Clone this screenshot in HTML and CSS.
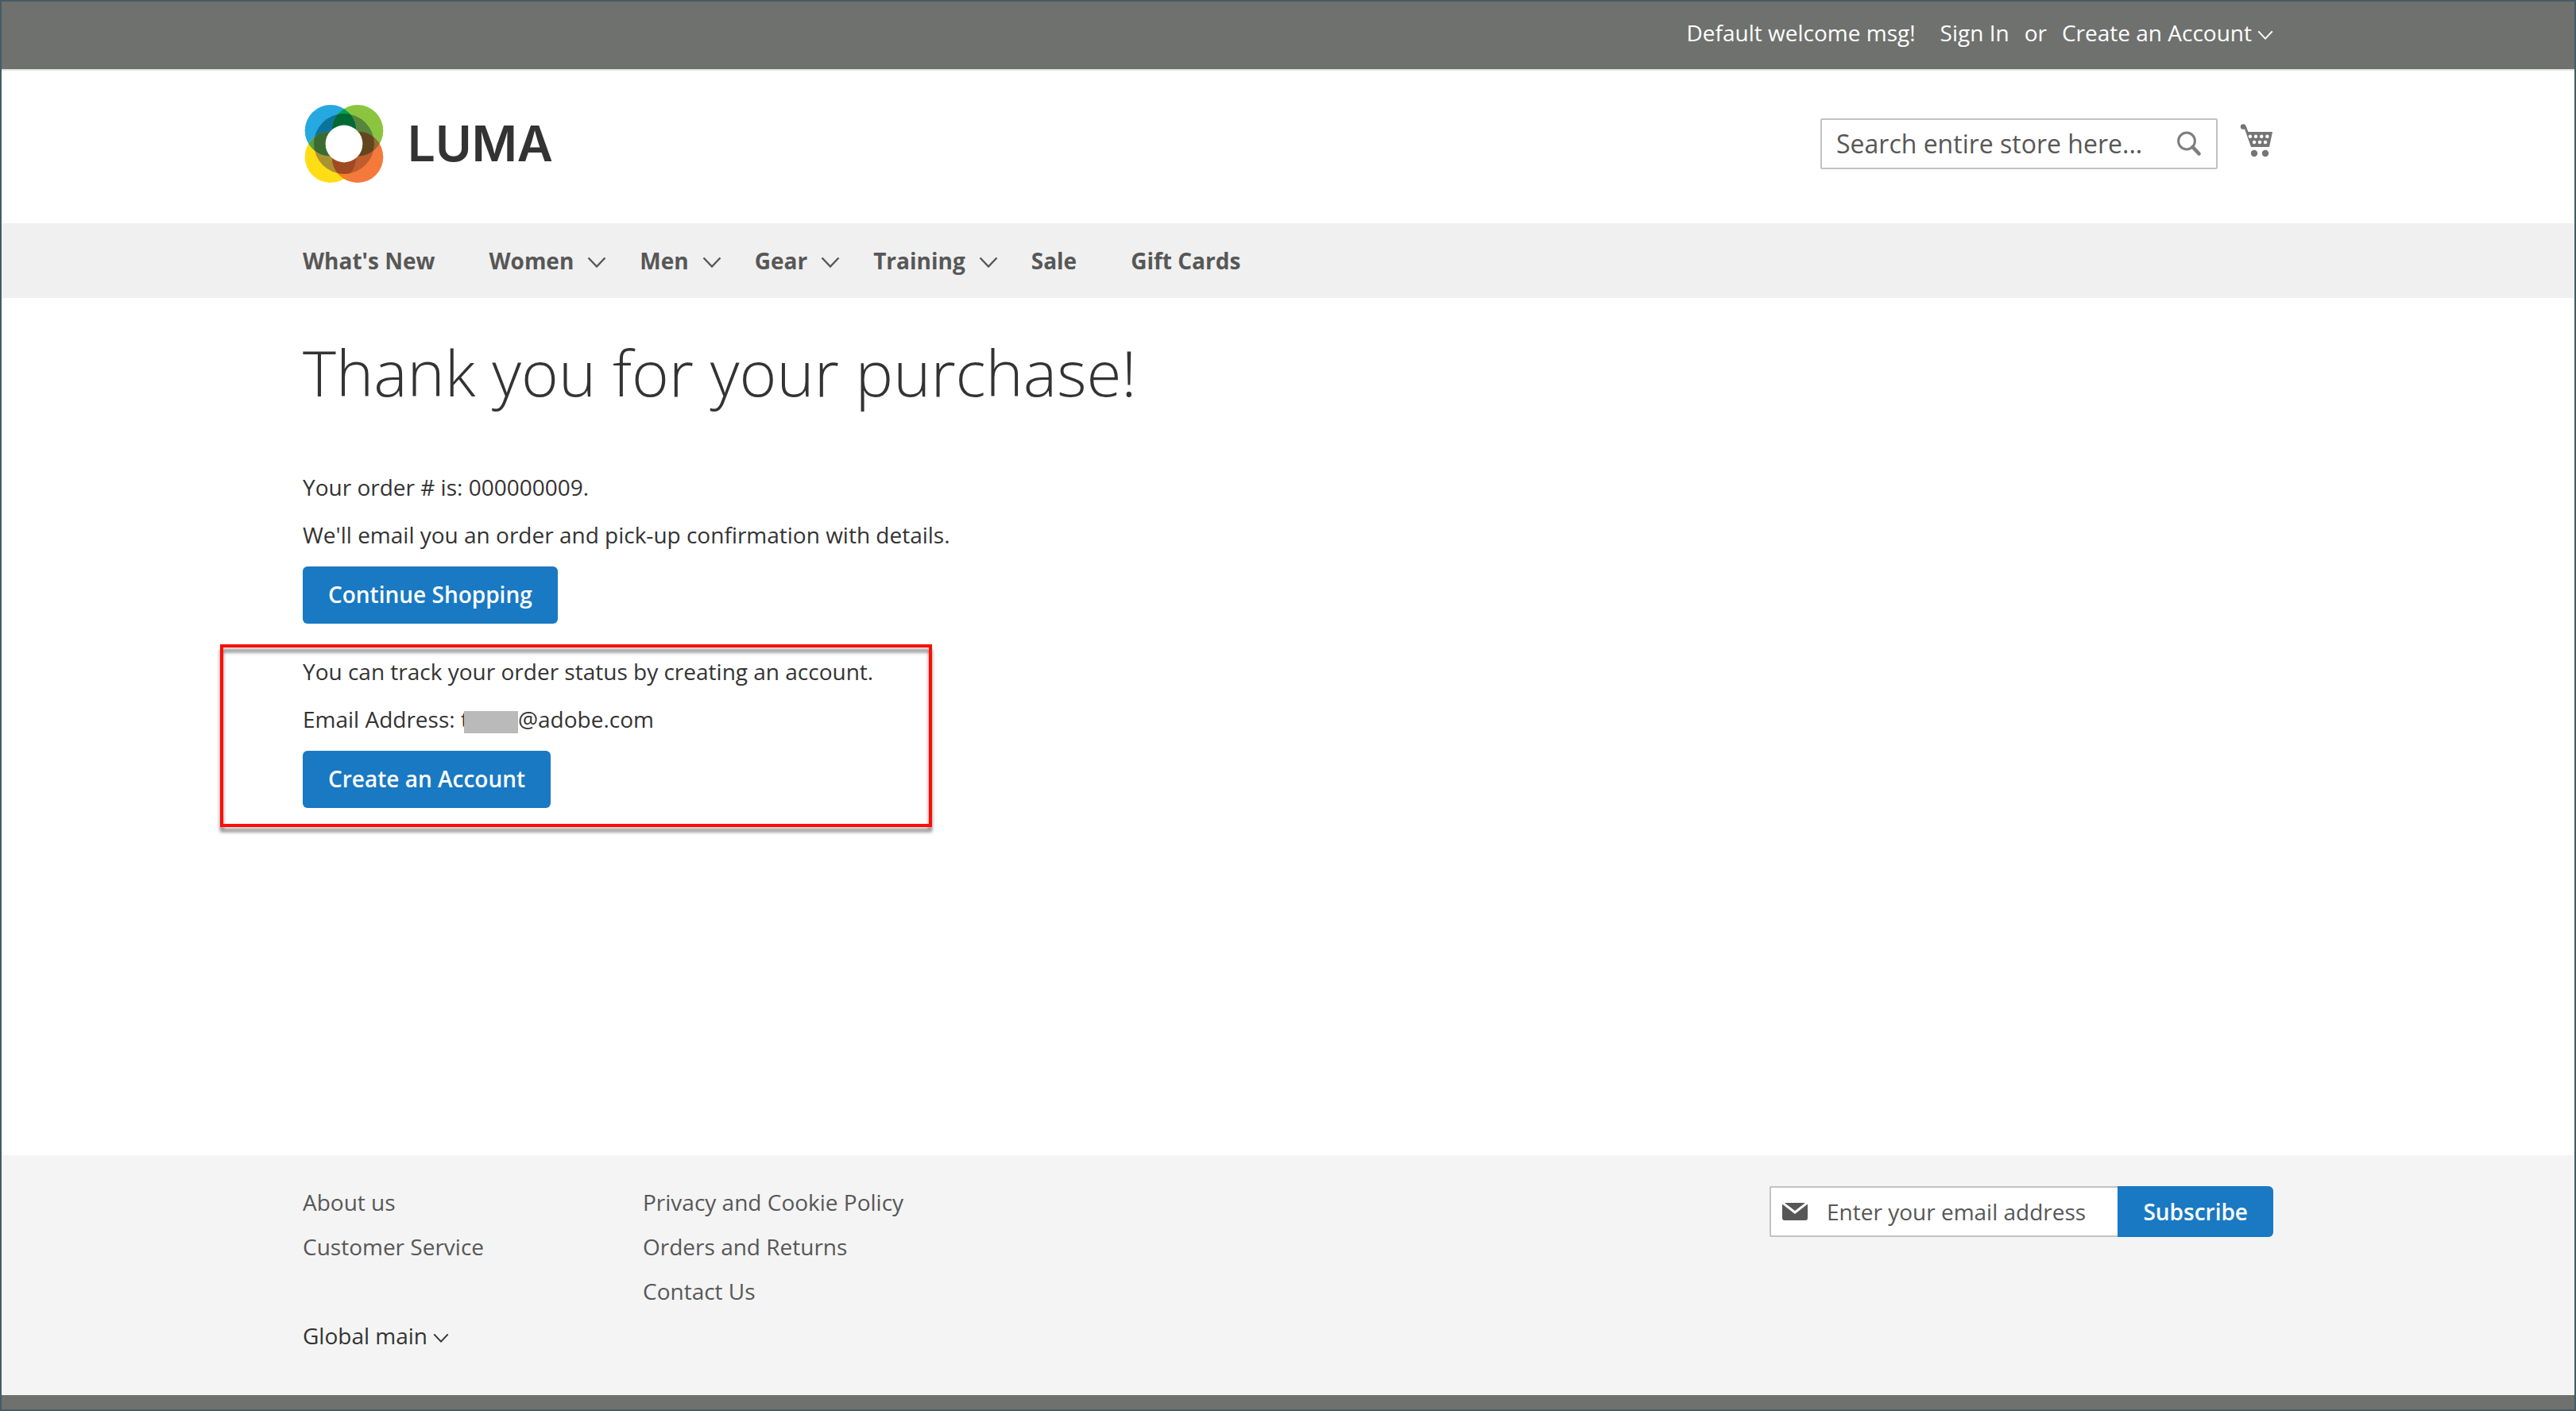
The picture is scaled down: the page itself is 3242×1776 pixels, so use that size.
FILE: index.html
```html
<!DOCTYPE html>
<html lang="en">
<head>
<meta charset="utf-8">
<meta name="viewport" content="width=device-width, initial-scale=1">
<title>Thank you for your purchase!</title>
<link rel="stylesheet" href="styles.css">
</head>
<body>
<svg class="defs" width="0" height="0" aria-hidden="true">
  <symbol id="chevron" viewBox="0 0 24 14"><path d="M1.5 1.500L12 12.500L22.500 1.500" fill="none" stroke="currentColor" stroke-width="2.400" /></symbol>
</svg>
<header>
  <div class="panel">
    <div class="container panel-links">
      <span class="welcome">Default welcome msg!</span>
      <a href="#">Sign In</a>
      <span>or</span>
      <a class="with-arrow" href="#">Create an Account <svg class="arrow-small" aria-hidden="true"><use href="#chevron"/></svg></a>
    </div>
  </div>
  <div class="container brand-row">
    <a class="logo" href="#">
      <svg class="mark" viewBox="-50 -50 100 100" aria-hidden="true">
        <defs>
          <clipPath id="tl"><circle cx="-17" cy="-16.700" r="32.300"/></clipPath>
          <clipPath id="br"><circle cx="17" cy="16.700" r="32.300"/></clipPath>
          <clipPath id="ring"><circle r="38"/></clipPath>
        </defs>
        <circle cx="-17" cy="-16.700" r="32.300" fill="#26a8e1"/>
        <circle cx="17" cy="-16.700" r="32.300" fill="#8bc53f"/>
        <circle cx="-17" cy="16.700" r="32.300" fill="#ffdd15"/>
        <circle cx="17" cy="16.700" r="32.300" fill="#f4793b"/>
        <g clip-path="url(#tl)">
          <circle cx="17" cy="-16.700" r="32.300" fill="#00a14b"/>
          <circle cx="-17" cy="16.700" r="32.300" fill="#559f45"/>
        </g>
        <g clip-path="url(#br)">
          <circle cx="17" cy="-16.700" r="32.300" fill="#906a33"/>
          <circle cx="-17" cy="16.700" r="32.300" fill="#f58220"/>
        </g>
        <g clip-path="url(#ring)">
          <circle cx="-17" cy="-16.700" r="32.300" fill="#0b749c"/>
          <circle cx="17" cy="-16.700" r="32.300" fill="#56863d"/>
          <circle cx="-17" cy="16.700" r="32.300" fill="#a99331"/>
          <circle cx="17" cy="16.700" r="32.300" fill="#c05d2e"/>
          <g clip-path="url(#tl)">
            <circle cx="17" cy="-16.700" r="32.300" fill="#006a37"/>
            <circle cx="-17" cy="16.700" r="32.300" fill="#3a6b33"/>
          </g>
          <g clip-path="url(#br)">
            <circle cx="17" cy="-16.700" r="32.300" fill="#64461e"/>
            <circle cx="-17" cy="16.700" r="32.300" fill="#a04923"/>
          </g>
        </g>
        <circle r="23.400" fill="#fff"/>
      </svg>
      <span class="wordmark">LUMA</span>
    </a>
    <form class="search" role="search">
      <input type="search" aria-label="Search" placeholder="Search entire store here...">
      <button type="button" aria-label="Search">
        <svg class="search-icon" viewBox="0 0 32 32" fill="none" stroke="#7d7d7d" aria-hidden="true"><circle cx="13" cy="12.500" r="10.400" stroke-width="3"/><path d="M20.500 20L28.500 28.500" stroke-width="4.600" stroke-linecap="round"/></svg>
      </button>
    </form>
    <a class="cart" href="#" aria-label="My Cart">
      <svg class="cart-icon" viewBox="0 0 42 42" fill="#757575" aria-hidden="true">
        <circle cx="4" cy="3.500" r="3.200"/>
        <path d="M4 0.500C8 0.500 8 4 10.500 10H41L37 29H14L6 6.500H4Z"/>
        <circle cx="18" cy="37" r="4.200"/><circle cx="32" cy="37" r="4.200"/>
        <g fill="#fff"><circle cx="13" cy="15.700" r="2.200"/><circle cx="20" cy="15.700" r="2.200"/><circle cx="27.200" cy="15.700" r="2.200"/><circle cx="34.400" cy="15.700" r="2.200"/><circle cx="18" cy="23" r="2.200"/><circle cx="25" cy="23" r="2.200"/><circle cx="32" cy="23" r="2.200"/></g>
      </svg>
    </a>
  </div>
</header>
<nav class="nav" aria-label="Store">
  <ul class="container">
    <li class="plain"><a href="#">What's New</a></li>
    <li><a href="#">Women <svg class="arrow" aria-hidden="true"><use href="#chevron"/></svg></a></li>
    <li><a href="#">Men <svg class="arrow" aria-hidden="true"><use href="#chevron"/></svg></a></li>
    <li><a href="#">Gear <svg class="arrow" aria-hidden="true"><use href="#chevron"/></svg></a></li>
    <li><a href="#">Training <svg class="arrow" aria-hidden="true"><use href="#chevron"/></svg></a></li>
    <li class="plain"><a href="#">Sale</a></li>
    <li class="plain"><a href="#">Gift Cards</a></li>
  </ul>
</nav>
<main class="container">
  <h1>Thank you for your purchase!</h1>
  <section class="order">
    <p>Your order # is: 000000009.</p>
    <p>We'll email you an order and pick-up confirmation with details.</p>
    <a class="button" href="#">Continue Shopping</a>
  </section>
  <section class="register">
    <p>You can track your order status by creating an account.</p>
    <p>Email Address: t<span class="redacted"></span>@adobe.com</p>
    <a class="button" href="#">Create an Account</a>
  </section>
</main>
<footer>
  <div class="container footer-row">
    <div class="footer-links">
      <ul>
        <li><a href="#">About us</a></li>
        <li><a href="#">Customer Service</a></li>
      </ul>
      <ul>
        <li><a href="#">Privacy and Cookie Policy</a></li>
        <li><a href="#">Orders and Returns</a></li>
        <li><a href="#">Contact Us</a></li>
      </ul>
      <button class="store with-arrow" type="button">Global main <svg class="arrow-small" aria-hidden="true"><use href="#chevron"/></svg></button>
    </div>
    <form class="newsletter">
      <label class="field">
        <svg class="mail-icon" viewBox="0 0 32 22" fill="#575757" aria-hidden="true"><path d="M3 0H29L16 10Z"/><path d="M0 1.500L16 14L32 1.500V19Q32 22 29 22H3Q0 22 0 19Z"/></svg>
        <input type="email" aria-label="Email address" placeholder="Enter your email address">
      </label>
      <button type="button">Subscribe</button>
    </form>
  </div>
</footer>
<div class="bottom-bar"></div>
</body>
</html>
```
FILE: styles.css
```css
* { box-sizing: border-box; }

body {
  display: flex;
  flex-direction: column;
  min-height: 100vh;
  margin: 0;
  border: 2px solid #455a64;
  background: #fff;
  color: #333;
  font: 400 28px/40px "Open Sans", "Noto Sans", sans-serif;
}

.defs { position: absolute; }
h1, p, ul { margin: 0; padding: 0; }
ul { list-style: none; }
a { color: inherit; text-decoration: none; }
button, input { font: inherit; border: 0; margin: 0; padding: 0; }
button { cursor: pointer; }
input { background: none; color: #333; min-width: 0; }
input::placeholder { color: #575757; opacity: 1; }

.container {
  width: 100%;
  max-width: 2480px;
  margin: 0 auto;
}

.with-arrow { display: flex; align-items: center; gap: 7px; }
.arrow { width: 24px; height: 14px; }
.arrow-small { width: 20px; height: 12px; margin-top: 6px; }

.panel {
  padding: 19px 0 26px;
  background: #6f716e;
  border-bottom: 2px solid #e5e5e5;
  color: #fff;
}
.panel-links { display: flex; justify-content: flex-end; gap: 19px; }
.welcome { margin-right: 12px; }

.brand-row { display: flex; align-items: center; height: 192px; padding-bottom: 8px; }
.logo { display: flex; align-items: center; gap: 30px; margin-right: auto; padding-left: 2px; }
.mark { width: 100px; height: 100px; }
.wordmark { font: 600 62px/72px Inter, sans-serif; }

.search {
  display: flex;
  align-items: center;
  width: 500px;
  height: 64px;
  margin-right: 28px;
  padding: 0 18px;
  border: 2px solid #c2c2c2;
  border-radius: 2px;
  font-size: 32px;
}
.search input { flex: 1; }
.search button { display: flex; background: none; }
.search-icon { width: 32px; height: 32px; }
.cart { display: flex; padding-bottom: 8px; }
.cart-icon { width: 42px; height: 42px; }

.nav { background: #f0f0f0; color: #575757; font-weight: 700; }
.nav ul { display: flex; gap: 42px; }
.nav a { display: flex; align-items: center; gap: 17px; padding: 27px 0; }
.nav .arrow { margin-top: 4px; }
.nav .plain { padding-right: 26px; }

main { flex: 1; padding: 49px 0 60px; }
h1 { margin-bottom: 81px; font-size: 80px; line-height: 88px; font-weight: 300; }
main p { margin-bottom: 20px; }

.button {
  display: inline-block;
  padding: 15px 32px 17px;
  border-radius: 6px;
  background: #1979c3;
  color: #fff;
  font-weight: 600;
  vertical-align: top;
}

.register {
  position: relative;
  width: 896px;
  margin: 26px 0 0 -104px;
  padding: 14px 24px 24px 104px;
}
.register::before {
  content: "";
  position: absolute;
  inset: 0;
  border: 4px solid #ff0d00;
  filter: drop-shadow(0 6px 2px rgba(0, 0, 0, 0.5));
  pointer-events: none;
}
.redacted {
  display: inline-block;
  width: 68px;
  height: 28px;
  margin-left: -6px;
  background: #bababa;
  vertical-align: -7px;
}

footer { padding: 39px 0 55px; background: #f4f4f4; }
.footer-row { display: flex; justify-content: space-between; align-items: flex-start; }
.footer-links {
  display: grid;
  grid-template-columns: 428px auto;
  row-gap: 16px;
  color: #575757;
}
.footer-links ul { display: flex; flex-direction: column; gap: 16px; }
.store { justify-self: start; background: none; color: #333; }

.newsletter { display: flex; height: 64px; width: 634px; }
.field {
  display: flex;
  align-items: center;
  flex: 1;
  gap: 24px;
  padding-left: 14px;
  border: 2px solid #c2c2c2;
  border-right: 0;
  border-radius: 2px 0 0 2px;
  background: #fff;
}
.mail-icon { width: 32px; height: 22px; flex: none; }
.field input { flex: 1; }
.newsletter button {
  padding: 0 32px;
  border-radius: 0 6px 6px 0;
  background: #1979c3;
  color: #fff;
  font-weight: 600;
}

.bottom-bar { height: 18px; background: #6f716e; }
```
